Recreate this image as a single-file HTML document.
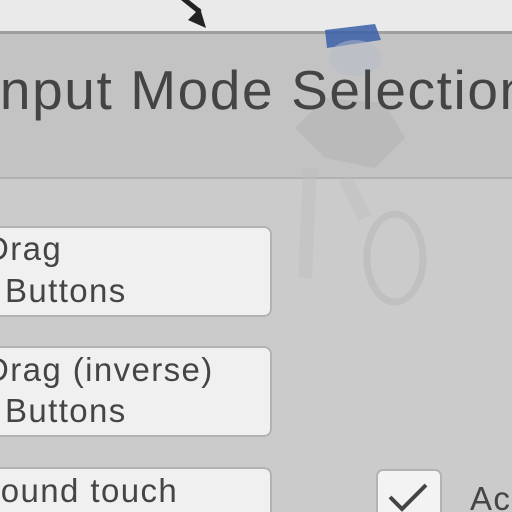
<!DOCTYPE html>
<html><head><style>
html,body{margin:0;padding:0;width:512px;height:512px;overflow:hidden;}
body{position:relative;background:#cbcbcb;font-family:"Liberation Sans",sans-serif;color:#454545;}
.top{position:absolute;left:0;top:0;width:512px;height:32px;background:#eaeaea;}
.line{position:absolute;left:0;top:31px;width:512px;height:3px;background:#9e9e9e;}
.hdr{position:absolute;left:0;top:34px;width:512px;height:143px;background:#c3c3c3;border-bottom:2px solid #b2b2b2;}
.title{position:absolute;left:-17px;top:58px;font-size:55px;letter-spacing:1.6px;white-space:nowrap;color:#444;}
.btn{position:absolute;left:-12px;width:284px;background:#f0f0f0;border:2px solid #b3b3b3;border-radius:8px;box-sizing:border-box;}
.t{position:absolute;font-size:33px;letter-spacing:1.4px;white-space:nowrap;color:#454545;}
.chk{position:absolute;left:376px;top:469px;width:66px;height:43px;background:#f3f3f3;border:2px solid #b3b3b3;border-bottom:none;border-radius:7px 7px 0 0;box-sizing:border-box;}
</style></head><body>
<div class="top"></div>
<svg style="position:absolute;left:180px;top:0" width="40" height="32"><path d="M0 -4 L20 12" stroke="#222" stroke-width="5"/><path d="M8 20 L26 28 L20 8 Z" fill="#222"/></svg>
<div class="line"></div>
<div class="hdr"></div>
<svg style="position:absolute;left:285px;top:18px" width="150" height="290">
<path d="M40 12 L90 6 L96 22 L42 30 Z" fill="#3a5fa8" opacity="0.85"/>
<ellipse cx="70" cy="40" rx="26" ry="18" fill="#b7bccb" opacity="0.5"/>
<path d="M10 110 L40 80 L100 85 L120 120 L90 150 L40 140 Z" fill="#aaaaaa" opacity="0.35"/>
<path d="M25 150 L20 260 M60 160 L80 200" stroke="#bdbdbd" stroke-width="14" opacity="0.4"/>
<ellipse cx="110" cy="240" rx="28" ry="44" fill="none" stroke="#b5b5b5" stroke-width="7" opacity="0.5"/>
</svg>
<div class="title">Input Mode Selection</div>
<div class="btn" style="top:226px;height:91px"></div>
<div class="t" style="left:-15px;top:230px">Drag</div>
<div class="t" style="left:5px;top:272px">Buttons</div>
<div class="btn" style="top:346px;height:91px"></div>
<div class="t" style="left:-15px;top:351px">Drag (inverse)</div>
<div class="t" style="left:5px;top:392px">Buttons</div>
<div class="btn" style="top:467px;height:45px;border-bottom:none;border-radius:8px 8px 0 0"></div>
<div class="t" style="left:-35px;top:472px">Around touch</div>
<div class="chk"></div>
<svg style="position:absolute;left:376px;top:469px" width="66" height="43"><path d="M14 28 L26 40 L50 16" stroke="#444" stroke-width="4" fill="none"/></svg>
<div class="t" style="left:470px;top:480px;font-size:33px">Ac</div>
</body></html>
